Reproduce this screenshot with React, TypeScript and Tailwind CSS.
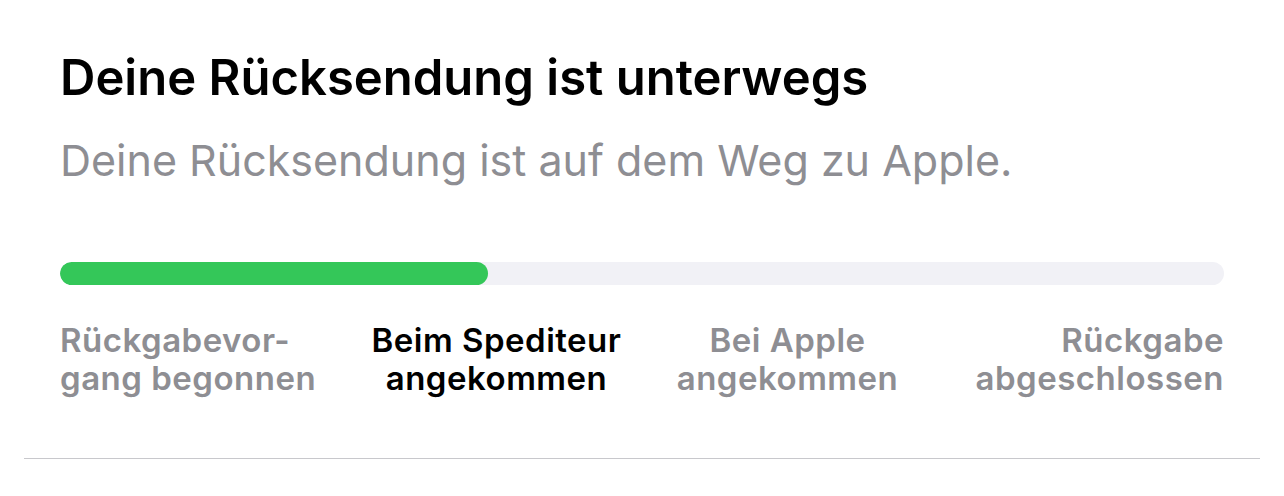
import React from "react";

export default function App() {
  const steps = [
    { l1: "Rückgabevor-", l2: "gang begonnen", align: "text-left", active: false },
    { l1: "Beim Spediteur", l2: "angekommen", align: "text-center", active: true },
    { l1: "Bei Apple", l2: "angekommen", align: "text-center", active: false },
    { l1: "Rückgabe", l2: "abgeschlossen", align: "text-right", active: false },
  ];
  return (
    <div
      className="w-[1284px] h-[496px] bg-white overflow-hidden"
      style={{ fontFamily: "Inter, 'Noto Sans', sans-serif" }}
    >
      <div className="px-[24px]">
        <div className="px-[36px] pt-[50px] pb-[61px] border-b border-[#c8c8cc]">
          <h1 className="text-[49px] leading-[56px] font-semibold text-black">
            Deine Rücksendung ist unterwegs
          </h1>
          <p className="mt-[29px] text-[43px] leading-[50px] text-[#8e8e93]">
            Deine Rücksendung ist auf dem Weg zu Apple.
          </p>
          <div className="mt-[77px] h-[23px] rounded-full bg-[#f1f1f6] overflow-hidden">
            <div className="h-full w-[428px] rounded-full bg-[#34c759]" />
          </div>
          <div className="mt-[36px] grid grid-cols-4">
            {steps.map((s, i) => (
              <div
                key={i}
                className={`${s.align} text-[33px] leading-[38px] tracking-[0.5px] font-semibold ${
                  s.active ? "text-black" : "text-[#8e8e93]"
                }`}
              >
                <div>{s.l1}</div>
                <div>{s.l2}</div>
              </div>
            ))}
          </div>
        </div>
      </div>
    </div>
  );
}
